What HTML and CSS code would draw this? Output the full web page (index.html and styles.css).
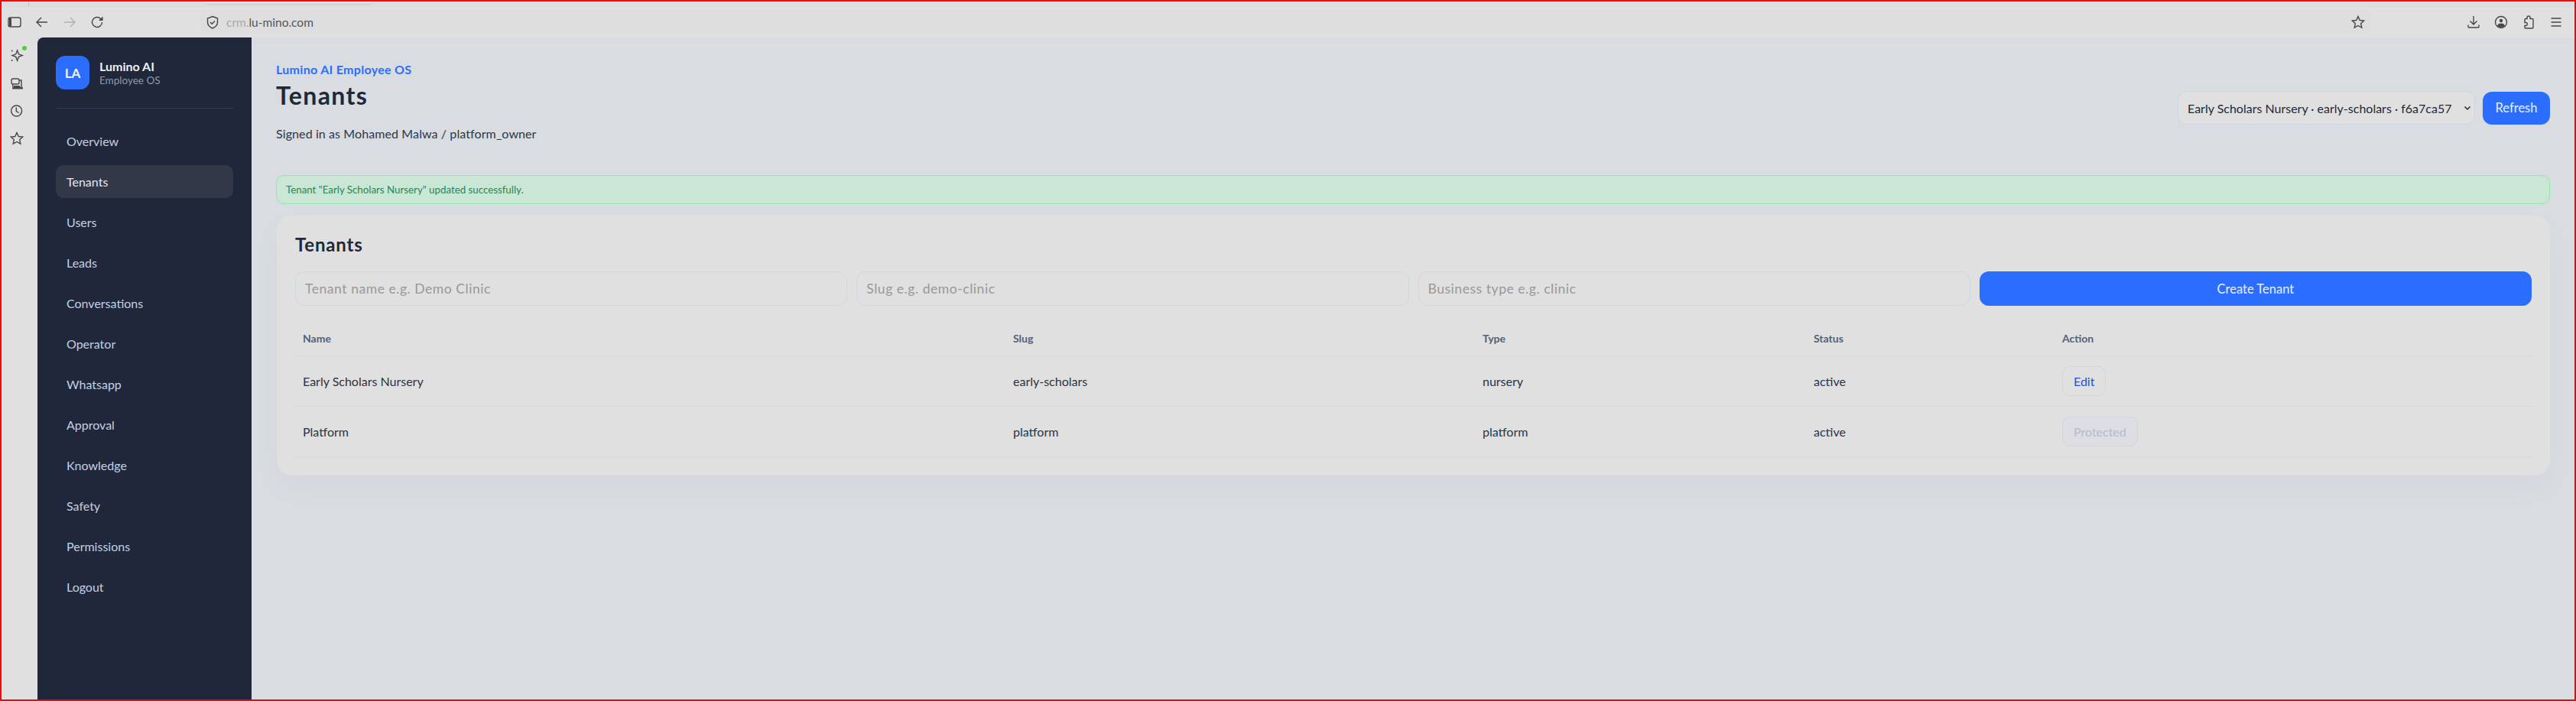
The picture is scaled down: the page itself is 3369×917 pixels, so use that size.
FILE: index.html
```html
<!DOCTYPE html>
<html lang="en">
<head>
    <meta charset="UTF-8">
    <meta name="viewport" content="width=device-width, initial-scale=1.0">
    <title>Tenants</title>
    <link rel="stylesheet" href="styles.css">
</head>
<body>
    <div class="frame">
        <div class="tabstrip"><span class="tab-sep"></span><span class="tab-edge"></span></div>
        <div class="toolbar">
            <svg class="ico" viewBox="0 0 20 20"><rect x="2" y="4" width="16" height="12" rx="2.5"/><path class="solid" d="M3 5h3v10H3z"/></svg>
            <svg class="ico" viewBox="0 0 20 20"><path d="M17 10H3M9 4l-6 6 6 6"/></svg>
            <svg class="ico ico-off" viewBox="0 0 20 20"><path d="M3 10h14M11 4l6 6-6 6"/></svg>
            <svg class="ico" viewBox="0 0 20 20"><path d="M16.500 10a6.500 6.500 0 1 1-2-4.700L17 7.500"/><path class="solid" d="M17.500 2.500v5.500h-5.500z"/></svg>
            <div class="urlbar">
                <svg class="ico ico-shield" viewBox="0 0 20 20"><path d="M10 2.500l6.500 2.500v5c0 4-3 6.500-6.500 8-3.500-1.500-6.500-4-6.500-8V5z"/><path d="M7 10l2.200 2.200L13 8.500"/></svg>
                <span class="url"><span class="url-dim">crm.</span>lu-mino.com</span>
                <svg class="ico ico-star" viewBox="0 0 20 20"><path d="M10 2.500l2.300 5 5.400.6-4 3.700 1.100 5.400-4.800-2.700-4.800 2.700 1.100-5.400-4-3.700 5.400-.6z"/></svg>
            </div>
            <div class="tool-right">
                <svg class="ico" viewBox="0 0 20 20"><path d="M10 2v11M5.500 8.500L10 13l4.500-4.500M3 13.500v2.500c0 .6.400 1 1 1h12c.6 0 1-.4 1-1v-2.500"/></svg>
                <svg class="ico" viewBox="0 0 20 20"><circle cx="10" cy="10" r="7.500"/><circle class="solid" cx="10" cy="8" r="2.200"/><path class="solid" d="M5 15c.5-2.500 2.500-3.500 5-3.500s4.500 1 5 3.500c-1.300 1.200-3 1.800-5 1.800s-3.700-.6-5-1.800z"/></svg>
                <svg class="ico" viewBox="0 0 20 20"><path d="M8 4c0-1.200.9-2 2-2s2 .8 2 2v1.500h3c.6 0 1 .4 1 1V17c0 .6-.4 1-1 1H6c-.6 0-1-.4-1-1v-2.500h1.500c1 0 1.800-.9 1.800-2s-.8-2-1.800-2H5V6.500c0-.6.400-1 1-1h2z"/></svg>
                <svg class="ico" viewBox="0 0 20 20"><path d="M3.500 5h13M3.500 10h13M3.500 15h13"/></svg>
            </div>
        </div>
        <div class="window">
            <div class="rail">
                <div class="rail-item">
                    <svg class="ico" viewBox="0 0 20 20"><path d="M10.600 3l1.800 4.800 4.800 1.800-4.800 1.800-1.800 4.800-1.800-4.800L4 9.600l4.800-1.800z"/><circle class="solid" cx="3.700" cy="3.600" r="1"/><circle class="solid" cx="3.700" cy="16" r="1"/></svg>
                    <span class="rail-dot"></span>
                </div>
                <div class="rail-item">
                    <svg class="ico" viewBox="0 0 20 20"><rect x="3" y="4" width="10" height="7" rx="2"/><path d="M4.700 11v3.500M13 6h3v8.500"/><path class="solid" d="M6 13h8v1.500h3.500l.5 3H4l.5-3H6z"/></svg>
                </div>
                <div class="rail-item">
                    <svg class="ico" viewBox="0 0 20 20"><circle cx="9.600" cy="10" r="7"/><path d="M9.300 5.500V10.500l3.500 2"/></svg>
                </div>
                <div class="rail-item">
                    <svg class="ico" viewBox="0 0 20 20"><path d="M10 2.500l2.300 5 5.400.6-4 3.700 1.100 5.400-4.800-2.700-4.800 2.700 1.100-5.400-4-3.700 5.400-.6z"/></svg>
                </div>
            </div>
            <aside class="sidebar">
                <div class="brand">
                    <div class="brand-logo">LA</div>
                    <div>
                        <div class="brand-name">Lumino AI</div>
                        <div class="brand-sub">Employee OS</div>
                    </div>
                </div>
                <nav class="nav">
                    <a class="nav-item">Overview</a>
                    <a class="nav-item active">Tenants</a>
                    <a class="nav-item">Users</a>
                    <a class="nav-item">Leads</a>
                    <a class="nav-item">Conversations</a>
                    <a class="nav-item">Operator</a>
                    <a class="nav-item">Whatsapp</a>
                    <a class="nav-item">Approval</a>
                    <a class="nav-item">Knowledge</a>
                    <a class="nav-item">Safety</a>
                    <a class="nav-item">Permissions</a>
                    <a class="nav-item">Logout</a>
                </nav>
            </aside>
            <main class="main">
                <header class="topbar">
                    <div>
                        <div class="eyebrow">Lumino AI Employee OS</div>
                        <h1 class="page-title">Tenants</h1>
                        <p class="signed">Signed in as Mohamed Malwa / platform_owner</p>
                    </div>
                    <div class="top-actions">
                        <div class="select">
                            <span>Early Scholars Nursery · early-scholars · f6a7ca57</span>
                            <svg class="chev" viewBox="0 0 10 10"><path d="M1.500 3.500L5 7l3.500-3.500"/></svg>
                        </div>
                        <button class="btn btn-refresh">Refresh</button>
                    </div>
                </header>
                <div class="alert">Tenant "Early Scholars Nursery" updated successfully.</div>
                <section class="card">
                    <h2 class="card-title">Tenants</h2>
                    <div class="form-row">
                        <input class="field" placeholder="Tenant name e.g. Demo Clinic">
                        <input class="field" placeholder="Slug e.g. demo-clinic">
                        <input class="field" placeholder="Business type e.g. clinic">
                        <button class="btn btn-create">Create Tenant</button>
                    </div>
                    <table class="tenants">
                        <thead>
                            <tr>
                                <th class="col-name">Name</th>
                                <th class="col-slug">Slug</th>
                                <th class="col-type">Type</th>
                                <th class="col-status">Status</th>
                                <th>Action</th>
                            </tr>
                        </thead>
                        <tbody>
                            <tr>
                                <td>Early Scholars Nursery</td>
                                <td>early-scholars</td>
                                <td>nursery</td>
                                <td>active</td>
                                <td><button class="row-btn">Edit</button></td>
                            </tr>
                            <tr>
                                <td>Platform</td>
                                <td>platform</td>
                                <td>platform</td>
                                <td>active</td>
                                <td><button class="row-btn protected">Protected</button></td>
                            </tr>
                        </tbody>
                    </table>
                </section>
            </main>
        </div>
    </div>
</body>
</html>
```

FILE: styles.css
```css
* {
    box-sizing: border-box;
}
html, body {
    margin: 0;
    padding: 0;
    height: 100%;
}
body {
    font-family: Lato, "Noto Sans", sans-serif;
    color: #1f2937;
    background-color: #d9dce1;
}
.frame {
    height: 100vh;
    border: 2px solid #ff0000;
    display: flex;
    flex-direction: column;
    overflow: hidden;
}
.ico {
    width: 20px;
    height: 20px;
    fill: none;
    stroke: #474747;
    stroke-width: 1.4;
    flex: none;
}
.ico .solid {
    fill: #474747;
    stroke: none;
}
.ico-off {
    stroke: #b0b0b0;
}

/* browser chrome */
.tabstrip {
    height: 7px;
    background-color: #dcdcdc;
    display: flex;
    padding-left: 35px;
}
.tab-sep {
    width: 1px;
    height: 7px;
    background-color: #c6c6c6;
}
.tab-edge {
    width: 220px;
    height: 4px;
    margin-left: 230px;
    background-color: #e0e0e0;
    border-bottom: 1px solid #cccccc;
    border-radius: 0 0 5px 5px;
}
.toolbar {
    height: 40px;
    background-color: #e0e0e0;
    display: flex;
    align-items: center;
    padding-left: 7px;
    gap: 16px;
}
.urlbar {
    flex: 1 1 auto;
    height: 32px;
    margin-left: 109px;
    margin-right: 109px;
    background-color: #dedede;
    border-radius: 8px;
    display: flex;
    align-items: center;
    padding: 0 6px;
}
.ico-shield {
    margin-right: 8px;
}
.ico-star {
    margin-left: auto;
}
.url {
    font-size: 15.500px;
    color: #555;
}
.url-dim {
    color: #a9a9a9;
}
.tool-right {
    display: flex;
    gap: 16px;
    padding-right: 14px;
}

/* window body */
.window {
    flex: 1;
    display: flex;
    min-height: 0;
}
.rail {
    width: 47px;
    background-color: #e0e0e0;
    padding: 14px 0 0 10px;
    display: flex;
    flex-direction: column;
    gap: 16px;
}
.rail-item {
    width: 20px;
    height: 20px;
    position: relative;
}
.rail-dot {
    position: absolute;
    top: -3px;
    right: -3px;
    width: 6px;
    height: 6px;
    border-radius: 50%;
    background-color: #4fd13c;
}
.sidebar {
    width: 280px;
    background-color: #20273a;
    border-top-left-radius: 8px;
    padding: 24px 24px 0;
    flex: none;
}
.brand {
    display: flex;
    align-items: center;
    gap: 13px;
    padding-bottom: 24px;
    border-bottom: 1px solid #373d4f;
    margin-bottom: 21px;
}
.brand-logo {
    width: 44px;
    height: 44px;
    border-radius: 12px;
    background-color: #2b6eff;
    color: #eef2ff;
    font-weight: 700;
    font-size: 17px;
    display: flex;
    align-items: center;
    justify-content: center;
}
.brand-name {
    color: #eceff4;
    font-size: 16px;
    font-weight: 700;
    line-height: 20px;
}
.brand-sub {
    color: #8d99ae;
    font-size: 13.500px;
    line-height: 16px;
}
.nav {
    display: flex;
    flex-direction: column;
    gap: 10px;
}
.nav-item {
    height: 43px;
    border-radius: 10px;
    padding: 0 14px;
    display: flex;
    align-items: center;
    font-size: 16px;
    color: #c3d0e2;
}
.nav-item.active {
    background-color: #333849;
    color: #e3e8f0;
}

/* main column */
.main {
    flex: 1;
    min-width: 0;
    padding: 32px 32px 0;
}
.topbar {
    display: flex;
    justify-content: space-between;
    align-items: center;
    margin-bottom: 43px;
}
.eyebrow {
    color: #2b6eff;
    font-size: 16px;
    letter-spacing: 0.3px;
    font-weight: 700;
    line-height: 20px;
}
.page-title {
    margin: 4px 0 0;
    font-size: 32px;
    letter-spacing: 1.400px;
    line-height: 40px;
    font-weight: 700;
    color: #1f2937;
}
.signed {
    margin: 19px 0 0;
    font-size: 16px;
    letter-spacing: 0.1px;
    line-height: 22px;
    color: #2f3746;
}
.top-actions {
    margin-top: 15px;
    display: flex;
    align-items: center;
    gap: 10px;
}
.select {
    width: 389px;
    height: 44px;
    border: 1px solid #ced6e2;
    border-radius: 12px;
    background-color: #e0e0e0;
    padding: 0 4px 0 12px;
    display: flex;
    align-items: center;
    justify-content: space-between;
    font-size: 16px;
    color: #1f2937;
}
.chev {
    width: 10px;
    height: 10px;
    fill: none;
    stroke: #1f2937;
    stroke-width: 1.5;
}
.btn {
    border: 0;
    border-radius: 12px;
    background-color: #2b6eff;
    color: #e8eeff;
    font-family: inherit;
    font-size: 16.500px;
}
.btn-refresh {
    width: 88px;
    height: 43px;
}
.alert {
    height: 38px;
    border: 1px solid #8fe8ac;
    border-radius: 10px;
    background-color: #cae6d5;
    color: #2c8552;
    font-size: 13.300px;
    display: flex;
    align-items: center;
    padding: 0 12px;
    margin-bottom: 15px;
}
.card {
    margin-left: 1px;
    background-color: #e0e0e0;
    border-radius: 20px;
    padding: 24px;
    box-shadow: 0 16px 40px rgba(31, 41, 55, 0.03);
}
.card-title {
    margin: 0 0 21px;
    font-size: 24px;
    letter-spacing: 0.8px;
    line-height: 28px;
    font-weight: 700;
    color: #1f2937;
}
.form-row {
    display: grid;
    grid-template-columns: repeat(4, 1fr);
    gap: 12px;
}
.field {
    height: 45px;
    width: 100%;
    border: 1px solid #ced6e2;
    border-radius: 12px;
    background: transparent;
    padding: 0 12px;
    font-family: inherit;
    font-size: 17.500px;
    letter-spacing: 0.55px;
}
.field::placeholder {
    color: #989898;
}
.btn-create {
    height: 45px;
}
.tenants {
    width: 100%;
    margin-top: 21px;
    border-collapse: collapse;
    table-layout: fixed;
}
.tenants th {
    height: 44px;
    padding: 0 10px;
    text-align: left;
    font-size: 14px;
    font-weight: 700;
    color: #55617a;
    border-bottom: 1px solid #d6d9dd;
}
.tenants td {
    height: 66px;
    padding: 0 10px;
    font-size: 16px;
    color: #2b3445;
    border-bottom: 1px solid #d6d9dd;
}
.col-name { width: 929px; }
.col-slug { width: 614px; }
.col-type { width: 433px; }
.col-status { width: 325px; }
.row-btn {
    height: 39px;
    padding: 0 14px;
    border: 1px solid #ced6e2;
    border-radius: 10px;
    background: transparent;
    font-family: inherit;
    font-size: 16px;
    color: #2f4fd0;
}
.row-btn.protected {
    background-color: #dcdee3;
    color: #b4bcc9;
}
```
